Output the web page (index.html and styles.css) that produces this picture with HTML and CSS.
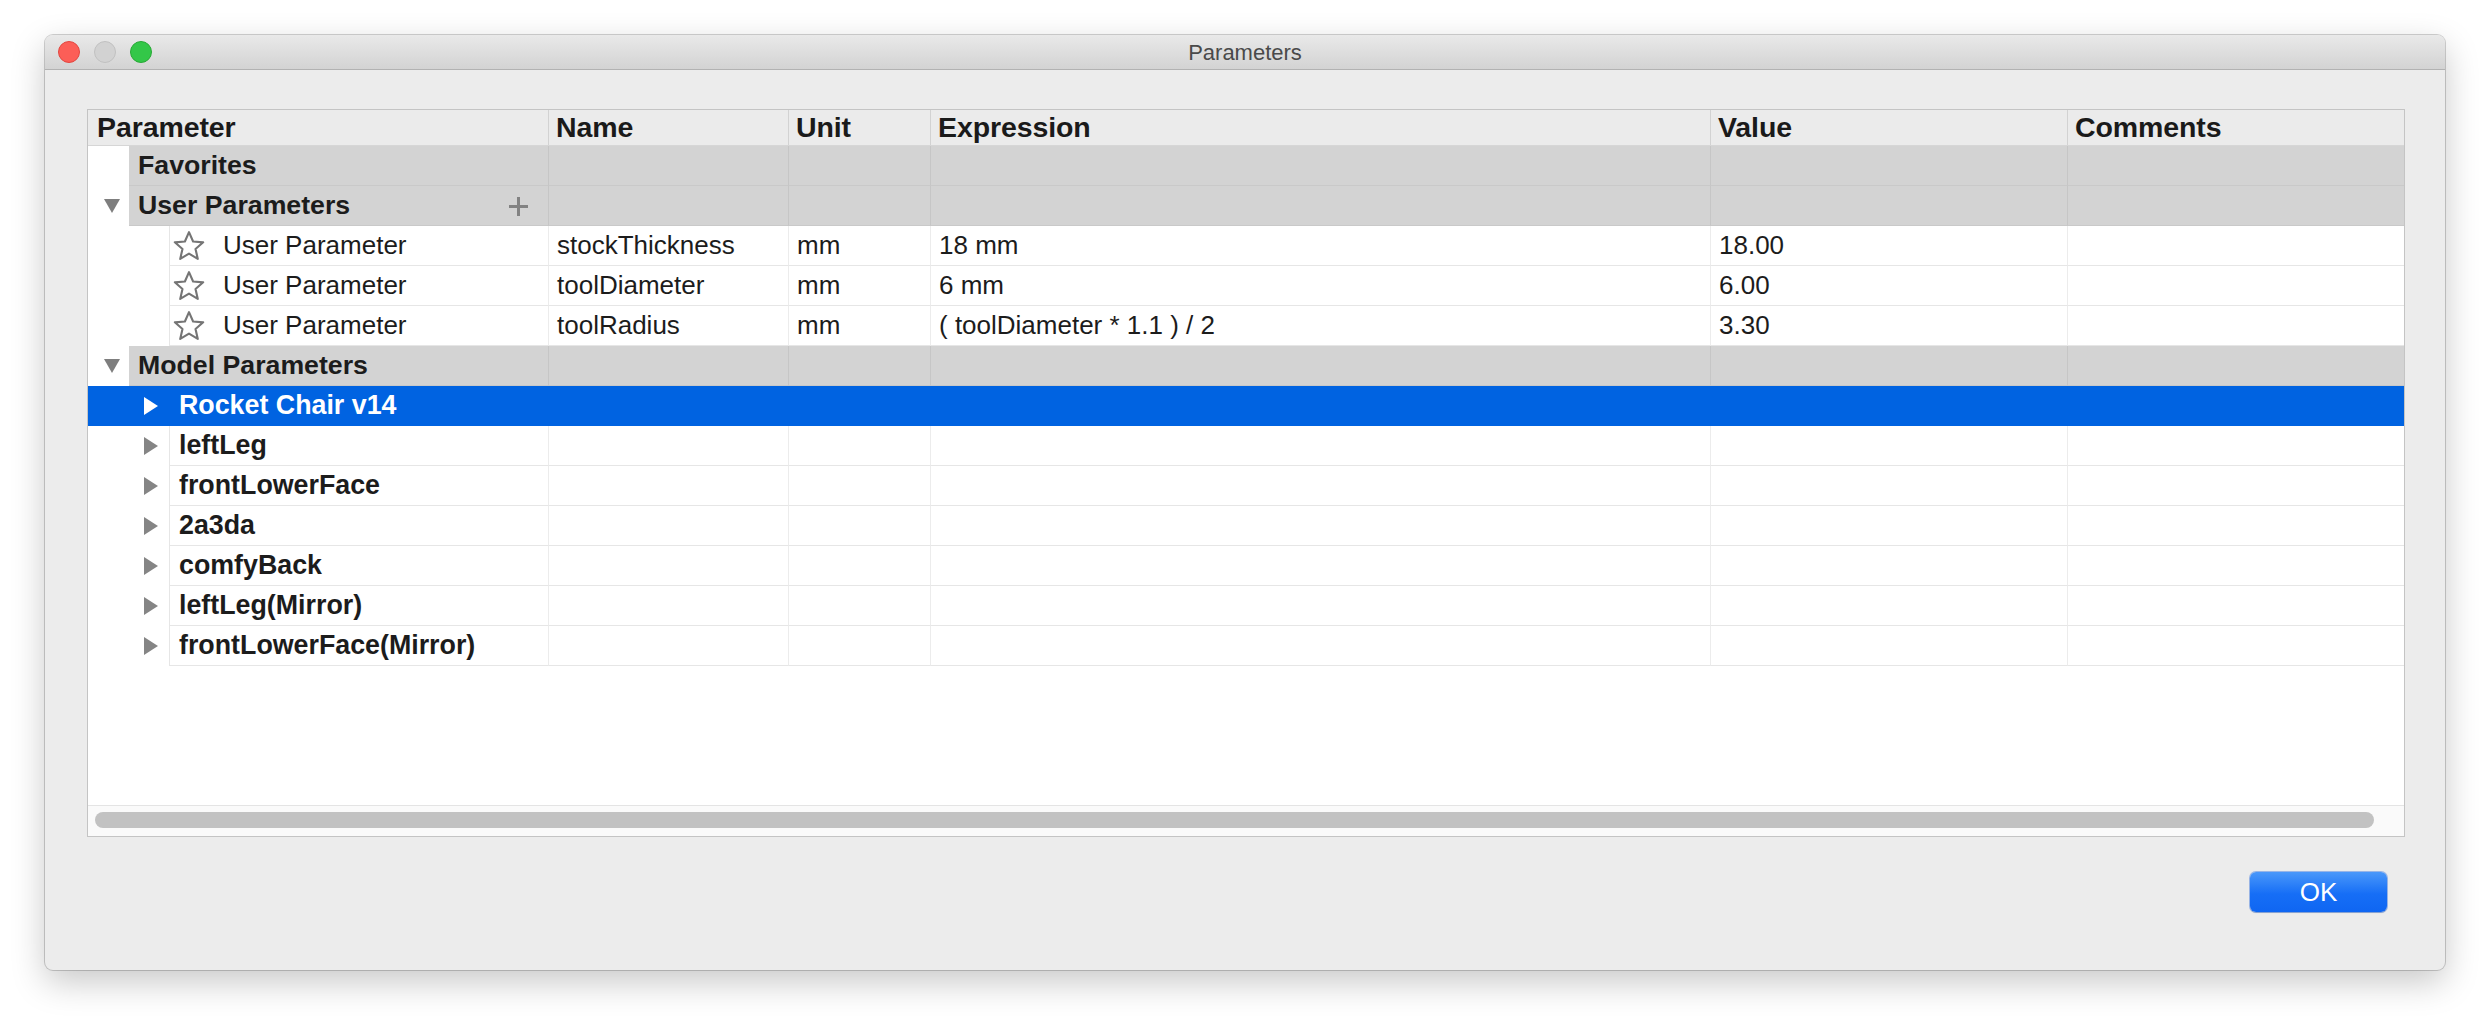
FILE: index.html
```html
<!DOCTYPE html>
<html>
<head>
<meta charset="utf-8">
<title>Parameters</title>
<link rel="stylesheet" href="styles.css">
</head>
<body>
<div class="window">
  <div class="titlebar">
    <div class="lights">
      <span class="light red"></span>
      <span class="light gray"></span>
      <span class="light green"></span>
    </div>
    <div class="title">Parameters</div>
  </div>
  <div class="content">
    <div class="table">
      <div class="row header">
        <div class="cell tree">Parameter</div>
        <div class="cell">Name</div>
        <div class="cell">Unit</div>
        <div class="cell">Expression</div>
        <div class="cell">Value</div>
        <div class="cell">Comments</div>
      </div>

      <div class="row group">
        <div class="cell tree"><span class="gutter"></span><span class="glabel">Favorites</span></div>
        <div class="cell"></div><div class="cell"></div><div class="cell"></div><div class="cell"></div><div class="cell"></div>
      </div>
      <div class="row group">
        <div class="cell tree"><span class="gutter"><span class="tri-down"></span></span><span class="glabel">User Parameters<span class="plus"></span></span></div>
        <div class="cell"></div><div class="cell"></div><div class="cell"></div><div class="cell"></div><div class="cell"></div>
      </div>

      <div class="row child">
        <div class="cell tree"><span class="cgutter"></span><span class="clabel"><svg class="star" viewBox="0 0 24 24"><path d="M12 2.2l2.9 6.6 7.1.6-5.4 4.7 1.6 7-6.2-3.7-6.2 3.7 1.6-7L2 9.4l7.1-.6z"/></svg>User Parameter</span></div>
        <div class="cell">stockThickness</div><div class="cell">mm</div><div class="cell">18 mm</div><div class="cell">18.00</div><div class="cell"></div>
      </div>
      <div class="row child">
        <div class="cell tree"><span class="cgutter"></span><span class="clabel"><svg class="star" viewBox="0 0 24 24"><path d="M12 2.2l2.9 6.6 7.1.6-5.4 4.7 1.6 7-6.2-3.7-6.2 3.7 1.6-7L2 9.4l7.1-.6z"/></svg>User Parameter</span></div>
        <div class="cell">toolDiameter</div><div class="cell">mm</div><div class="cell">6 mm</div><div class="cell">6.00</div><div class="cell"></div>
      </div>
      <div class="row child">
        <div class="cell tree"><span class="cgutter"></span><span class="clabel"><svg class="star" viewBox="0 0 24 24"><path d="M12 2.2l2.9 6.6 7.1.6-5.4 4.7 1.6 7-6.2-3.7-6.2 3.7 1.6-7L2 9.4l7.1-.6z"/></svg>User Parameter</span></div>
        <div class="cell">toolRadius</div><div class="cell">mm</div><div class="cell">( toolDiameter * 1.1 ) / 2</div><div class="cell">3.30</div><div class="cell"></div>
      </div>

      <div class="row group">
        <div class="cell tree"><span class="gutter"><span class="tri-down"></span></span><span class="glabel">Model Parameters</span></div>
        <div class="cell"></div><div class="cell"></div><div class="cell"></div><div class="cell"></div><div class="cell"></div>
      </div>

      <div class="row model selected">
        <div class="cell tree"><span class="cgutter"><span class="tri-right"></span></span><span class="mlabel">Rocket Chair v14</span></div>
        <div class="cell"></div><div class="cell"></div><div class="cell"></div><div class="cell"></div><div class="cell"></div>
      </div>
      <div class="row model">
        <div class="cell tree"><span class="cgutter"><span class="tri-right"></span></span><span class="mlabel">leftLeg</span></div>
        <div class="cell"></div><div class="cell"></div><div class="cell"></div><div class="cell"></div><div class="cell"></div>
      </div>
      <div class="row model">
        <div class="cell tree"><span class="cgutter"><span class="tri-right"></span></span><span class="mlabel">frontLowerFace</span></div>
        <div class="cell"></div><div class="cell"></div><div class="cell"></div><div class="cell"></div><div class="cell"></div>
      </div>
      <div class="row model">
        <div class="cell tree"><span class="cgutter"><span class="tri-right"></span></span><span class="mlabel">2a3da</span></div>
        <div class="cell"></div><div class="cell"></div><div class="cell"></div><div class="cell"></div><div class="cell"></div>
      </div>
      <div class="row model">
        <div class="cell tree"><span class="cgutter"><span class="tri-right"></span></span><span class="mlabel">comfyBack</span></div>
        <div class="cell"></div><div class="cell"></div><div class="cell"></div><div class="cell"></div><div class="cell"></div>
      </div>
      <div class="row model">
        <div class="cell tree"><span class="cgutter"><span class="tri-right"></span></span><span class="mlabel">leftLeg(Mirror)</span></div>
        <div class="cell"></div><div class="cell"></div><div class="cell"></div><div class="cell"></div><div class="cell"></div>
      </div>
      <div class="row model">
        <div class="cell tree"><span class="cgutter"><span class="tri-right"></span></span><span class="mlabel">frontLowerFace(Mirror)</span></div>
        <div class="cell"></div><div class="cell"></div><div class="cell"></div><div class="cell"></div><div class="cell"></div>
      </div>

      <div class="filler"></div>
      <div class="hscroll"><div class="thumb"></div></div>
    </div>
    <div class="buttons">
      <button class="ok">OK</button>
    </div>
  </div>
</div>
</body>
</html>
```

FILE: styles.css
```css
* { box-sizing: border-box; }
html, body { margin: 0; padding: 0; }
body {
  background: #ffffff;
  width: 2492px;
  height: 1024px;
  overflow: hidden;
  font-family: "Liberation Sans", Arial, sans-serif;
  color: #1c1c1c;
}
.window {
  margin: 35px 0 0 45px;
  width: 2400px;
  height: 935px;
  background: #ececec;
  border-radius: 8px;
  box-shadow: 0 0 0 1px rgba(0,0,0,0.18), 0 12px 34px rgba(0,0,0,0.22);
  display: flex;
  flex-direction: column;
  overflow: hidden;
}
.titlebar {
  height: 35px;
  flex: none;
  background: linear-gradient(#e9e9e9, #d3d3d3);
  border-bottom: 1px solid #b2b2b2;
  display: flex;
  align-items: center;
  position: relative;
}
.lights {
  display: flex;
  gap: 14px;
  padding-left: 13px;
}
.light {
  width: 22px;
  height: 22px;
  border-radius: 50%;
  display: block;
}
.light.red { background: #fc5e57; border: 1px solid #e2463f; }
.light.gray { background: #d2d2d2; border: 1px solid #c0c0c0; }
.light.green { background: #33c748; border: 1px solid #27a935; }
.title {
  position: absolute;
  left: 0; right: 0; top: 0; bottom: 0;
  display: flex;
  align-items: center;
  justify-content: center;
  font-size: 22px;
  color: #4a4a4a;
  padding-top: 1px;
}
.content {
  flex: 1;
  padding: 39px 40px 0 42px;
  display: flex;
  flex-direction: column;
}
.table {
  height: 728px;
  border: 1px solid #c4c4c4;
  background: #ffffff;
  display: flex;
  flex-direction: column;
}
.row {
  display: grid;
  grid-template-columns: 460px 240px 142px 780px 357px 1fr;
  height: 40px;
  flex: none;
}
.cell {
  font-size: 26px;
  display: flex;
  align-items: center;
  padding-left: 8px;
  white-space: nowrap;
  overflow: hidden;
  border-left: 1px solid #ececec;
}
.cell.tree { border-left: none; padding-left: 0; }
.header {
  height: 36px;
  background: #ebebeb;
  border-bottom: 1px solid #d6d6d6;
}
.header .cell {
  font-weight: bold;
  border-left: 1px solid #d2d2d2;
  font-size: 28.5px;
  letter-spacing: -0.1px;
  color: #1a1a1a;
  padding-left: 7px;
}
.header .cell.tree { padding-left: 9px; border-left: none; }

.group { background: #d3d3d3; }
.group .cell { border-left: 1px solid #c6c6c6; border-bottom: 1px solid #c9c9c9; }
.group .cell.tree { border-left: none; border-bottom: none; }
.gutter {
  width: 41px;
  height: 100%;
  background: #ffffff;
  flex: none;
  display: flex;
  align-items: center;
  justify-content: center;
  padding-left: 6px;
}
.glabel {
  flex: 1;
  height: 100%;
  display: flex;
  align-items: center;
  font-weight: bold;
  font-size: 26.7px;
  padding-left: 9px;
  border-bottom: 1px solid #c9c9c9;
  position: relative;
}
.plus {
  position: absolute;
  right: 20px;
  top: 11px;
  width: 19px;
  height: 19px;
}
.plus::before, .plus::after {
  content: "";
  position: absolute;
  background: #828282;
}
.plus::before { left: 0; right: 0; top: 8px; height: 3px; }
.plus::after { top: 0; bottom: 0; left: 8px; width: 3px; }
.tri-down {
  width: 0; height: 0;
  border-left: 8px solid transparent;
  border-right: 8px solid transparent;
  border-top: 14px solid #7e7e7e;
}
.tri-right {
  width: 0; height: 0;
  border-top: 9px solid transparent;
  border-bottom: 9px solid transparent;
  border-left: 14px solid #858585;
}

.child .cell { border-bottom: 1px solid #e6e6e6; }
.child .cell.tree { border-bottom: none; }
.cgutter {
  width: 81px;
  height: 100%;
  flex: none;
  display: flex;
  align-items: center;
  justify-content: flex-end;
  padding-right: 11px;
}
.clabel {
  flex: 1;
  height: 100%;
  display: flex;
  align-items: center;
  border-left: 1px solid #e6e6e6;
  border-bottom: 1px solid #e6e6e6;
  padding-left: 2px;
}
.star {
  width: 34px;
  height: 34px;
  fill: none;
  stroke: #757575;
  stroke-width: 1.5;
  stroke-linejoin: round;
  margin-right: 17px;
}
.model .cell { border-bottom: 1px solid #e6e6e6; }
.model .cell.tree { border-bottom: none; }
.mlabel {
  flex: 1;
  height: 100%;
  display: flex;
  align-items: center;
  font-weight: bold;
  font-size: 26.8px;
  border-left: 1px solid #e6e6e6;
  border-bottom: 1px solid #e6e6e6;
  padding-left: 9px;
}
.model.selected { background: #0063e1; }
.model.selected .cell { border-color: #0063e1; color: #fff; }
.model.selected .mlabel { border-color: #0063e1; color: #ffffff; }
.model.selected .tri-right { border-left-color: #ffffff; }

.filler { flex: 1; }
.hscroll {
  height: 31px;
  flex: none;
  background: #fafafa;
  border-top: 1px solid #e4e4e4;
  padding: 6px 30px 0 7px;
}
.thumb {
  height: 16px;
  border-radius: 8px;
  background: #c2c2c2;
}
.buttons {
  display: flex;
  justify-content: flex-end;
  padding: 35px 18px 0 0;
}
.ok {
  width: 137px;
  height: 40px;
  border: none;
  border-radius: 6px;
  background: linear-gradient(#4a98fa, #166ef6 55%, #0f66f2);
  box-shadow: 0 0 0 1px rgba(0,80,220,0.35), 0 1px 1px rgba(0,0,0,0.15);
  color: #ffffff;
  font-family: "Liberation Sans", Arial, sans-serif;
  font-size: 26px;
  padding: 0;
}
```
